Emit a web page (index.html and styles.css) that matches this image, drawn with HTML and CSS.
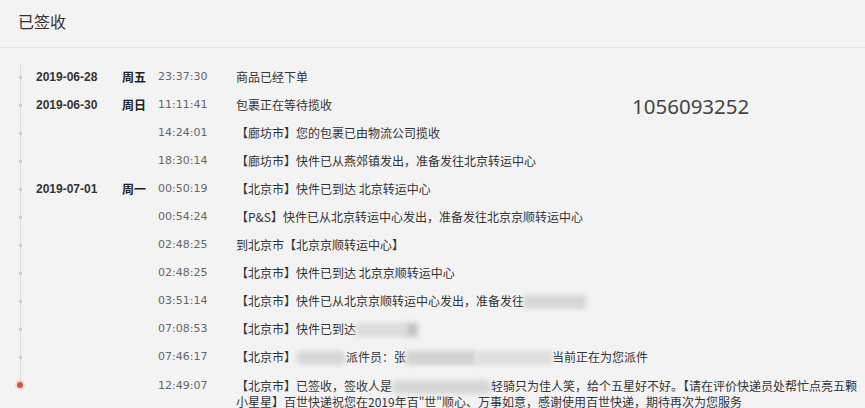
FILE: index.html
```html
<!DOCTYPE html>
<html lang="zh-CN">
<head>
<meta charset="utf-8">
<title>已签收</title>
<link rel="stylesheet" href="styles.css">
</head>
<body>
<div class="page">
  <div class="header">已签收</div>
  <div class="track-no">1056093252</div>
  <div class="list">
    <div class="row"><span class="dot"></span><span class="date">2019-06-28</span><span class="week">周五</span><span class="time">23:37:30</span><span class="text">商品已经下单</span></div>
    <div class="row"><span class="dot"></span><span class="date">2019-06-30</span><span class="week">周日</span><span class="time">11:11:41</span><span class="text">包裹正在等待揽收</span></div>
    <div class="row"><span class="dot"></span><span class="date"></span><span class="week"></span><span class="time">14:24:01</span><span class="text">【廊坊市】您的包裹已由物流公司揽收</span></div>
    <div class="row"><span class="dot"></span><span class="date"></span><span class="week"></span><span class="time">18:30:14</span><span class="text">【廊坊市】快件已从燕郊镇发出，准备发往北京转运中心</span></div>
    <div class="row"><span class="dot"></span><span class="date">2019-07-01</span><span class="week">周一</span><span class="time">00:50:19</span><span class="text">【北京市】快件已到达 北京转运中心</span></div>
    <div class="row"><span class="dot"></span><span class="date"></span><span class="week"></span><span class="time">00:54:24</span><span class="text">【P&amp;S】快件已从北京转运中心发出，准备发往北京京顺转运中心</span></div>
    <div class="row"><span class="dot"></span><span class="date"></span><span class="week"></span><span class="time">02:48:25</span><span class="text">到北京市【北京京顺转运中心】</span></div>
    <div class="row"><span class="dot"></span><span class="date"></span><span class="week"></span><span class="time">02:48:25</span><span class="text">【北京市】快件已到达 北京京顺转运中心</span></div>
    <div class="row"><span class="dot"></span><span class="date"></span><span class="week"></span><span class="time">03:51:14</span><span class="text">【北京市】快件已从北京京顺转运中心发出，准备发往<span class="blur b-a"></span></span></div>
    <div class="row"><span class="dot"></span><span class="date"></span><span class="week"></span><span class="time">07:08:53</span><span class="text">【北京市】快件已到达<span class="blur b-b"></span><span class="blur b-dark"></span></span></div>
    <div class="row"><span class="dot"></span><span class="date"></span><span class="week"></span><span class="time">07:46:17</span><span class="text">【北京市】<span class="blur b-c"></span>派件员：张<span class="blur b-d"></span><span class="blur b-d2"></span>当前正在为您派件</span></div>
    <div class="row last"><span class="dot red"></span><span class="date"></span><span class="week"></span><span class="time">12:49:07</span><span class="text">【北京市】已签收，签收人是<span class="blur b-e"></span>轻骑只为佳人笑，给个五星好不好。【请在评价快递员处帮忙点亮五颗小星星】百世快递祝您在2019年百"世"顺心、万事如意，感谢使用百世快递，期待再次为您服务</span></div>
  </div>
</div>
</body>
</html>
```

FILE: styles.css
```css
html, body {
  margin: 0;
  padding: 0;
  background: #f3f3f3;
}
body {
  font-family: "Noto Sans CJK SC", "Noto Sans", sans-serif;
  color: #333;
  overflow: hidden;
}
.page {
  position: relative;
  width: 865px;
  height: 408px;
}
.header {
  height: 47px;
  padding-left: 18px;
  font-size: 16px;
  line-height: 43px;
  color: #333;
  border-bottom: 1px solid #e4e4e4;
}
.track-no {
  position: absolute;
  left: 632px;
  top: 94px;
  font-family: "Noto Sans", sans-serif;
  font-size: 20.5px;
  line-height: 24px;
  color: #444;
}
.list {
  padding-top: 15px;
}
.row {
  display: grid;
  grid-template-columns: 36px 86px 36px 77px 630px;
  padding: 6px 0;
  font-size: 12px;
  line-height: 16px;
  background-image: linear-gradient(#dcdcdc, #dcdcdc);
  background-repeat: no-repeat;
  background-size: 1px 100%;
  background-position: 20px 0;
}
.row.last {
  line-height: 15px;
  padding-top: 7px;
  background-size: 1px 14px;
}
.dot {
  display: block;
  width: 3px;
  height: 3px;
  margin: 7px 0 0 19px;
  background: #d0d0d0;
}
.dot.red {
  width: 6px;
  height: 6px;
  margin: 4px 0 0 17px;
  border-radius: 50%;
  background: #d5553a;
  box-shadow: 0 0 0 2px rgba(213, 85, 58, 0.15);
}
.date {
  font-family: "Liberation Sans", Arial, sans-serif;
  font-weight: bold;
  color: #333;
}
.week {
  font-weight: bold;
  color: #222;
}
.time {
  font-family: "DejaVu Sans", sans-serif;
  font-size: 11px;
  color: #666;
}
.text {
  color: #333;
  padding-left: 1px;
}
.blur {
  display: inline-block;
  height: 14px;
  vertical-align: -3px;
  background: #d6d6d6;
  filter: blur(2.5px);
}
.b-a { width: 62px; }
.b-b { width: 50px; background: #dcdcdc; }
.b-dark { width: 12px; background: #c4c4c4; }
.b-c { width: 50px; border-radius: 7px; }
.b-d { width: 70px; background: #d2d2d2; }
.b-d2 { width: 76px; background: #dedede; }
.b-e { width: 99px; border-radius: 6px; }
```
